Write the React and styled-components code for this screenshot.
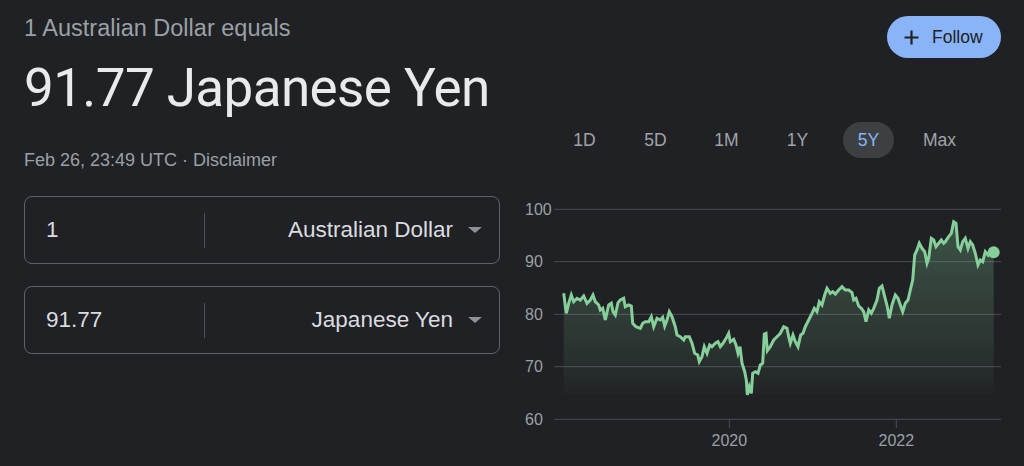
import React from "react";
import styled, { createGlobalStyle } from "styled-components";

const sans = `"Liberation Sans", Arial, Helvetica, sans-serif`;

const GlobalStyle = createGlobalStyle`
  html, body {
    margin: 0;
    padding: 0;
    background: #202124;
  }
  body {
    font-family: ${sans};
  }
`;

const Page = styled.div`
  width: 1024px;
  height: 466px;
  background: #202124;
  display: flex;
  overflow: hidden;
`;

const Left = styled.div`
  width: 512px;
  padding-left: 24px;
  box-sizing: border-box;
  display: flex;
  flex-direction: column;
`;

const Right = styled.div`
  flex: 1;
  display: flex;
  flex-direction: column;
`;

const Subtitle = styled.div`
  margin-top: 14px;
  font-size: 23.5px;
  line-height: 28px;
  color: #9aa0a6;
  white-space: nowrap;
`;

const Heading = styled.div`
  margin-top: 16px;
  font-family: Roboto, "Noto Sans", sans-serif;
  font-size: 53px;
  line-height: 60px;
  letter-spacing: -0.6px;
  color: #e8eaed;
  white-space: nowrap;
`;

const Meta = styled.div`
  margin-top: 31px;
  font-size: 18px;
  line-height: 22px;
  color: #9aa0a6;
  white-space: nowrap;
`;

const Converter = styled.div`
  display: flex;
  flex-direction: column;
  gap: 22px;
  margin-top: 25px;
  width: 476px;
`;

const Field = styled.div`
  height: 68px;
  box-sizing: border-box;
  border: 1px solid #5f6368;
  border-radius: 8px;
  display: flex;
  align-items: center;
`;

const Amount = styled.div`
  width: 179px;
  padding-left: 21px;
  box-sizing: border-box;
  font-size: 22.5px;
  color: #dadce0;
`;

const Divider = styled.div`
  width: 1px;
  height: 35px;
  background: #4d5156;
`;

const Currency = styled.div`
  flex: 1;
  display: flex;
  align-items: center;
  justify-content: flex-end;
  padding-right: 17px;
  font-size: 22.5px;
  color: #dadce0;
  white-space: nowrap;
`;

const Caret = styled.span`
  width: 0;
  height: 0;
  margin-left: 15px;
  border-left: 7px solid transparent;
  border-right: 7px solid transparent;
  border-top: 6px solid #8e9296;
`;

const FollowRow = styled.div`
  display: flex;
  justify-content: flex-end;
  padding: 16px 23px 0 0;
`;

const FollowButton = styled.button`
  height: 42px;
  width: 114px;
  border: none;
  border-radius: 21px;
  background: #8ab4f8;
  color: #202124;
  font-family: ${sans};
  font-size: 17.5px;
  display: flex;
  align-items: center;
  gap: 13px;
  padding: 0 0 0 17px;
`;

const Tabs = styled.div`
  display: flex;
  gap: 20px;
  margin-top: 64px;
  padding-left: 47px;
`;

const Tab = styled.div`
  width: 51px;
  height: 36px;
  border-radius: 18px;
  display: flex;
  align-items: center;
  justify-content: center;
  font-size: 17.5px;
  color: ${(p) => (p.$active ? "#8ab4f8" : "#a0a4a9")};
  background: ${(p) => (p.$active ? "#3c4043" : "transparent")};
`;

const ChartSvg = styled.svg`
  display: block;
  margin-top: 22px;
  font-family: ${sans};
`;

// traced from the 5Y chart, in 3x units relative to the chart origin
const trace = [
  [155,340],[163,400],[170,370],[178,345],[185,365],[195,355],[205,360],[215,348],[225,370],[235,360],
  [243,345],[250,365],[260,375],[265,390],[272,385],[280,420],[290,375],[298,370],[303,395],[310,405],
  [318,368],[325,360],[335,355],[340,380],[350,375],[358,378],[362,430],[372,440],[385,445],[392,430],
  [400,425],[410,425],[418,410],[425,440],[435,415],[445,420],[452,412],[458,438],[465,420],[472,395],
  [480,410],[490,440],[495,465],[505,470],[515,480],[520,470],[532,470],[540,490],[548,520],[557,525],
  [562,545],[570,530],[577,500],[585,520],[593,495],[600,500],[610,490],[618,485],[625,500],[633,490],
  [645,470],[650,460],[655,485],[665,478],[672,495],[678,520],[684,500],[690,550],[698,575],[703,600],
  [706,645],[712,620],[718,640],[722,580],[730,575],[738,580],[745,555],[752,550],[757,462],[762,460],
  [766,512],[775,500],[785,480],[795,470],[805,460],[815,440],[825,445],[830,470],[835,490],[843,465],
  [850,485],[858,500],[866,465],[873,460],[880,440],[890,420],[900,400],[907,385],[915,395],[922,365],
  [930,375],[938,345],[945,325],[955,340],[962,335],[970,342],[980,330],[990,320],[1000,330],[1010,330],
  [1020,338],[1025,360],[1032,355],[1040,378],[1048,385],[1055,395],[1062,425],[1070,390],[1078,400],
  [1085,385],[1095,360],[1102,325],[1110,318],[1118,350],[1126,380],[1132,415],[1140,375],[1150,345],
  [1158,355],[1165,375],[1172,395],[1180,370],[1188,360],[1195,330],[1202,300],[1208,225],[1215,210],
  [1222,190],[1230,205],[1238,215],[1245,250],[1250,235],[1258,175],[1265,180],[1272,200],[1280,190],
  [1288,180],[1295,190],[1300,185],[1310,170],[1318,160],[1325,125],[1332,130],[1338,200],[1345,210],
  [1352,185],[1360,175],[1368,205],[1375,185],[1382,195],[1390,220],[1398,255],[1405,240],[1412,245],
  [1420,215],[1428,225],[1435,210],[1445,217],
];

const points = trace.map(([x, y]) => [x / 3, y / 3]);
const linePath = points.map(([x, y], i) => `${i ? "L" : "M"}${x.toFixed(1)},${y.toFixed(1)}`).join(" ");
const last = points[points.length - 1];
const areaPath = `${linePath} L${last[0].toFixed(1)},214 L${points[0][0].toFixed(1)},214 Z`;

const grid = [
  { label: "100", y: 29.3 },
  { label: "90", y: 81.7 },
  { label: "80", y: 134.3 },
  { label: "70", y: 186.7 },
  { label: "60", y: 239.3 },
];

const years = [
  { label: "2020", x: 217.3 },
  { label: "2022", x: 384.3 },
];

function Chart() {
  return (
    <ChartSvg width="512" height="286" viewBox="0 0 512 286">
      <defs>
        <linearGradient id="fill" x1="0" y1="40" x2="0" y2="214" gradientUnits="userSpaceOnUse">
          <stop offset="0" stopColor="#81c995" stopOpacity="0.3" />
          <stop offset="0.7" stopColor="#81c995" stopOpacity="0.12" />
          <stop offset="1" stopColor="#81c995" stopOpacity="0.02" />
        </linearGradient>
      </defs>
      {grid.map((g) => (
        <g key={g.label}>
          <line x1="42" x2="489" y1={g.y} y2={g.y} stroke="#4a4d52" strokeWidth="1" />
          <text x="13" y={g.y + 5.7} fill="#9aa0a6" fontSize="16">{g.label}</text>
        </g>
      ))}
      {years.map((t) => (
        <g key={t.label}>
          <line x1={t.x} x2={t.x} y1="239.3" y2="248" stroke="#4a4d52" strokeWidth="1" />
          <text x={t.x} y="265.7" fill="#9aa0a6" fontSize="16" textAnchor="middle">{t.label}</text>
        </g>
      ))}
      <path d={areaPath} fill="url(#fill)" />
      <path d={linePath} fill="none" stroke="#86cf9a" strokeWidth="3" strokeLinejoin="miter" />
      <circle cx={last[0]} cy={last[1]} r="6" fill="#86cf9a" />
    </ChartSvg>
  );
}

const ranges = ["1D", "5D", "1M", "1Y", "5Y", "Max"];

export default function App() {
  return (
    <Page>
      <GlobalStyle />
      <Left>
        <Subtitle>1 Australian Dollar equals</Subtitle>
        <Heading>91.77 Japanese Yen</Heading>
        <Meta>Feb 26, 23:49 UTC · Disclaimer</Meta>
        <Converter>
          <Field>
            <Amount>1</Amount>
            <Divider />
            <Currency>Australian Dollar<Caret /></Currency>
          </Field>
          <Field>
            <Amount>91.77</Amount>
            <Divider />
            <Currency>Japanese Yen<Caret /></Currency>
          </Field>
        </Converter>
      </Left>
      <Right>
        <FollowRow>
          <FollowButton>
            <svg width="15" height="15" viewBox="0 0 15 15">
              <path d="M7.5 0.5v14M0.5 7.5h14" stroke="#202124" strokeWidth="2.2" />
            </svg>
            Follow
          </FollowButton>
        </FollowRow>
        <Tabs>
          {ranges.map((r) => (
            <Tab key={r} $active={r === "5Y"}>{r}</Tab>
          ))}
        </Tabs>
        <Chart />
      </Right>
    </Page>
  );
}
